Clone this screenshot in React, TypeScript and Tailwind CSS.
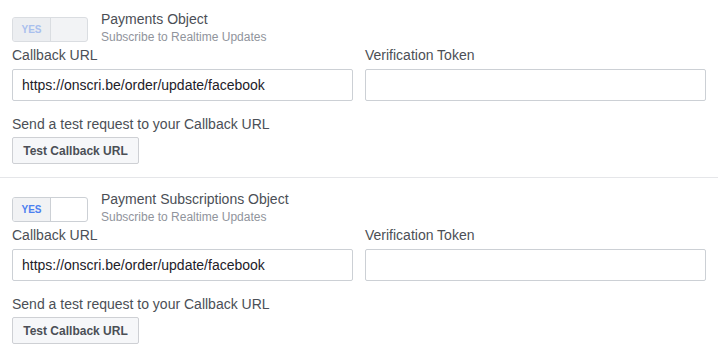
import React from "react";

const FONT = "font-['Liberation_Sans','Helvetica_Neue',Arial,sans-serif]";

function Toggle({ disabled }: { disabled?: boolean }) {
  return (
    <div
      className={
        "mt-[7px] flex h-[25px] w-[76px] shrink-0 overflow-hidden rounded-[3px] border " +
        (disabled ? "border-[#dadde1] bg-[#f2f3f5]" : "border-[#ccd0d5] bg-white")
      }
    >
      <div
        className={
          "flex w-[38px] items-center justify-center border-r text-[10px] font-bold " +
          (disabled ? "border-[#dadde1] bg-[#eceef1] text-[#a9c0ee]" : "border-[#ccd0d5] bg-[#f1f2f4] text-[#4c80f0]")
        }
      >
        YES
      </div>
      <div className="flex-1" />
    </div>
  );
}

function Section({ title, disabled, last }: { title: string; disabled?: boolean; last?: boolean }) {
  return (
    <div className={"px-3 " + (last ? "pt-3" : "pt-[10px] pb-[13px] border-b border-[#e5e6e9]")}>
      <div className="flex items-start gap-[13px]">
        <Toggle disabled={disabled} />
        <div>
          <div className="text-[14px] leading-[18px] text-[#4b4f56]">{title}</div>
          <div className="text-[12px] leading-[18px] text-[#90949c]">Subscribe to Realtime Updates</div>
        </div>
      </div>
      <div className="grid grid-cols-2 gap-3">
        <div>
          <div className="text-[14px] leading-[18px] text-[#4b4f56]">Callback URL</div>
          <input
            readOnly
            value="https://onscri.be/order/update/facebook"
            className="mt-[5px] h-[32px] w-full rounded-[2px] border border-[#ccd0d5] bg-white px-[9px] text-[14px] text-[#1d2129] outline-none"
          />
        </div>
        <div>
          <div className="text-[14px] leading-[18px] text-[#4b4f56]">Verification Token</div>
          <input
            readOnly
            value=""
            className="mt-[5px] h-[32px] w-full rounded-[2px] border border-[#ccd0d5] bg-white px-[9px] text-[14px] text-[#1d2129] outline-none"
          />
        </div>
      </div>
      <div className="mt-[14px] text-[14px] leading-[18px] text-[#4b4f56]">Send a test request to your Callback URL</div>
      <button
        type="button"
        className="mt-[4px] h-[27px] w-[127px] rounded-[2px] border border-[#ced0d4] bg-[#f6f7f9] text-[12px] font-bold text-[#4b4f56]"
      >
        Test Callback URL
      </button>
    </div>
  );
}

export default function App() {
  return (
    <div className={"h-[356px] w-[718px] bg-white " + FONT}>
      <Section title="Payments Object" disabled />
      <Section title="Payment Subscriptions Object" last />
    </div>
  );
}
